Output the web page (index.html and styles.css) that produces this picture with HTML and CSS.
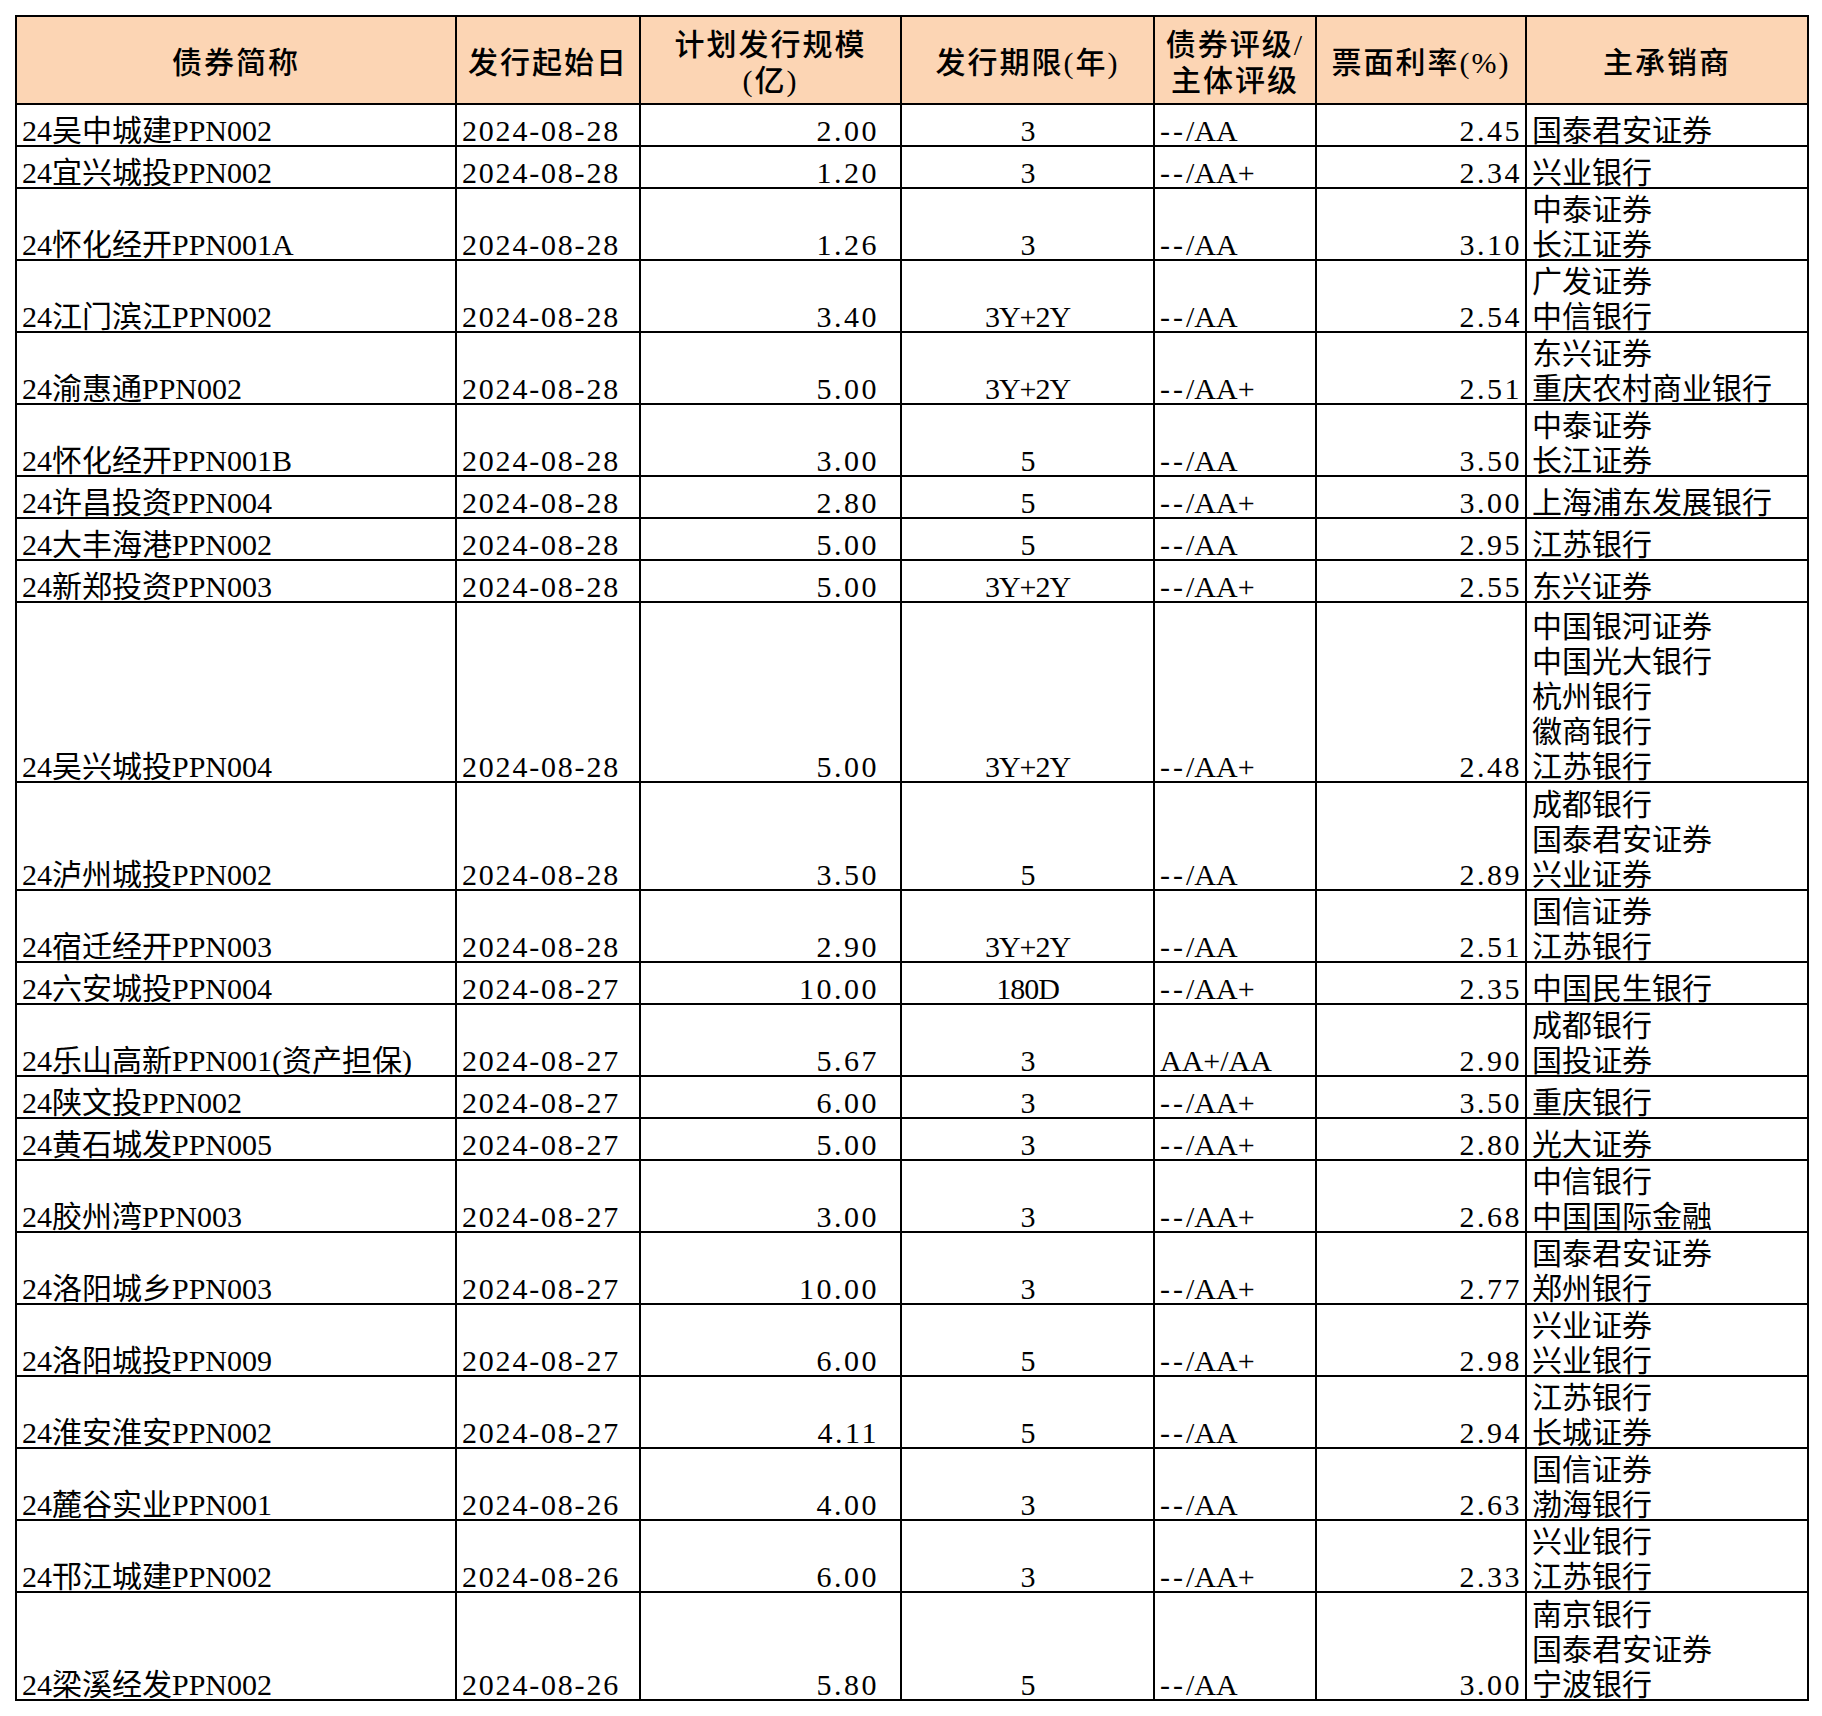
FILE: index.html
```html
<!DOCTYPE html>
<html lang="zh-CN">
<head>
<meta charset="utf-8">
<title>PPN发行</title>
<link rel="stylesheet" href="styles.css">
</head>
<body>
<table class="bonds">
<colgroup>
<col class="c1"><col class="c2"><col class="c3"><col class="c4"><col class="c5"><col class="c6"><col class="c7">
</colgroup>
<thead>
<tr class="head">
<th>债券简称</th><th>发行起始日</th><th>计划发行规模<br>(亿)</th><th>发行期限(年)</th><th>债券评级/<br>主体评级</th><th>票面利率(%)</th><th>主承销商</th>
</tr>
</thead>
<tbody>
<tr class="r1"><td><div>24吴中城建PPN002</div></td><td><div>2024-08-28</div></td><td><div>2.00</div></td><td><div>3</div></td><td><div><span class="dash">--</span>/AA</div></td><td><div>2.45</div></td><td><div>国泰君安证券</div></td></tr>
<tr class="r1"><td><div>24宜兴城投PPN002</div></td><td><div>2024-08-28</div></td><td><div>1.20</div></td><td><div>3</div></td><td><div><span class="dash">--</span>/AA+</div></td><td><div>2.34</div></td><td><div>兴业银行</div></td></tr>
<tr class="r2"><td><div>24怀化经开PPN001A</div></td><td><div>2024-08-28</div></td><td><div>1.26</div></td><td><div>3</div></td><td><div><span class="dash">--</span>/AA</div></td><td><div>3.10</div></td><td><div>中泰证券<br>长江证券</div></td></tr>
<tr class="r2"><td><div>24江门滨江PPN002</div></td><td><div>2024-08-28</div></td><td><div>3.40</div></td><td><div>3Y+2Y</div></td><td><div><span class="dash">--</span>/AA</div></td><td><div>2.54</div></td><td><div>广发证券<br>中信银行</div></td></tr>
<tr class="r2"><td><div>24渝惠通PPN002</div></td><td><div>2024-08-28</div></td><td><div>5.00</div></td><td><div>3Y+2Y</div></td><td><div><span class="dash">--</span>/AA+</div></td><td><div>2.51</div></td><td><div>东兴证券<br>重庆农村商业银行</div></td></tr>
<tr class="r2"><td><div>24怀化经开PPN001B</div></td><td><div>2024-08-28</div></td><td><div>3.00</div></td><td><div>5</div></td><td><div><span class="dash">--</span>/AA</div></td><td><div>3.50</div></td><td><div>中泰证券<br>长江证券</div></td></tr>
<tr class="r1"><td><div>24许昌投资PPN004</div></td><td><div>2024-08-28</div></td><td><div>2.80</div></td><td><div>5</div></td><td><div><span class="dash">--</span>/AA+</div></td><td><div>3.00</div></td><td><div>上海浦东发展银行</div></td></tr>
<tr class="r1"><td><div>24大丰海港PPN002</div></td><td><div>2024-08-28</div></td><td><div>5.00</div></td><td><div>5</div></td><td><div><span class="dash">--</span>/AA</div></td><td><div>2.95</div></td><td><div>江苏银行</div></td></tr>
<tr class="r1"><td><div>24新郑投资PPN003</div></td><td><div>2024-08-28</div></td><td><div>5.00</div></td><td><div>3Y+2Y</div></td><td><div><span class="dash">--</span>/AA+</div></td><td><div>2.55</div></td><td><div>东兴证券</div></td></tr>
<tr class="r5"><td><div>24吴兴城投PPN004</div></td><td><div>2024-08-28</div></td><td><div>5.00</div></td><td><div>3Y+2Y</div></td><td><div><span class="dash">--</span>/AA+</div></td><td><div>2.48</div></td><td><div>中国银河证券<br>中国光大银行<br>杭州银行<br>徽商银行<br>江苏银行</div></td></tr>
<tr class="r3"><td><div>24泸州城投PPN002</div></td><td><div>2024-08-28</div></td><td><div>3.50</div></td><td><div>5</div></td><td><div><span class="dash">--</span>/AA</div></td><td><div>2.89</div></td><td><div>成都银行<br>国泰君安证券<br>兴业证券</div></td></tr>
<tr class="r2"><td><div>24宿迁经开PPN003</div></td><td><div>2024-08-28</div></td><td><div>2.90</div></td><td><div>3Y+2Y</div></td><td><div><span class="dash">--</span>/AA</div></td><td><div>2.51</div></td><td><div>国信证券<br>江苏银行</div></td></tr>
<tr class="r1"><td><div>24六安城投PPN004</div></td><td><div>2024-08-27</div></td><td><div>10.00</div></td><td><div>180D</div></td><td><div><span class="dash">--</span>/AA+</div></td><td><div>2.35</div></td><td><div>中国民生银行</div></td></tr>
<tr class="r2"><td><div>24乐山高新PPN001(资产担保)</div></td><td><div>2024-08-27</div></td><td><div>5.67</div></td><td><div>3</div></td><td><div>AA+/AA</div></td><td><div>2.90</div></td><td><div>成都银行<br>国投证券</div></td></tr>
<tr class="r1"><td><div>24陕文投PPN002</div></td><td><div>2024-08-27</div></td><td><div>6.00</div></td><td><div>3</div></td><td><div><span class="dash">--</span>/AA+</div></td><td><div>3.50</div></td><td><div>重庆银行</div></td></tr>
<tr class="r1"><td><div>24黄石城发PPN005</div></td><td><div>2024-08-27</div></td><td><div>5.00</div></td><td><div>3</div></td><td><div><span class="dash">--</span>/AA+</div></td><td><div>2.80</div></td><td><div>光大证券</div></td></tr>
<tr class="r2"><td><div>24胶州湾PPN003</div></td><td><div>2024-08-27</div></td><td><div>3.00</div></td><td><div>3</div></td><td><div><span class="dash">--</span>/AA+</div></td><td><div>2.68</div></td><td><div>中信银行<br>中国国际金融</div></td></tr>
<tr class="r2"><td><div>24洛阳城乡PPN003</div></td><td><div>2024-08-27</div></td><td><div>10.00</div></td><td><div>3</div></td><td><div><span class="dash">--</span>/AA+</div></td><td><div>2.77</div></td><td><div>国泰君安证券<br>郑州银行</div></td></tr>
<tr class="r2"><td><div>24洛阳城投PPN009</div></td><td><div>2024-08-27</div></td><td><div>6.00</div></td><td><div>5</div></td><td><div><span class="dash">--</span>/AA+</div></td><td><div>2.98</div></td><td><div>兴业证券<br>兴业银行</div></td></tr>
<tr class="r2"><td><div>24淮安淮安PPN002</div></td><td><div>2024-08-27</div></td><td><div>4.11</div></td><td><div>5</div></td><td><div><span class="dash">--</span>/AA</div></td><td><div>2.94</div></td><td><div>江苏银行<br>长城证券</div></td></tr>
<tr class="r2"><td><div>24麓谷实业PPN001</div></td><td><div>2024-08-26</div></td><td><div>4.00</div></td><td><div>3</div></td><td><div><span class="dash">--</span>/AA</div></td><td><div>2.63</div></td><td><div>国信证券<br>渤海银行</div></td></tr>
<tr class="r2"><td><div>24邗江城建PPN002</div></td><td><div>2024-08-26</div></td><td><div>6.00</div></td><td><div>3</div></td><td><div><span class="dash">--</span>/AA+</div></td><td><div>2.33</div></td><td><div>兴业银行<br>江苏银行</div></td></tr>
<tr class="r3"><td><div>24梁溪经发PPN002</div></td><td><div>2024-08-26</div></td><td><div>5.80</div></td><td><div>5</div></td><td><div><span class="dash">--</span>/AA</div></td><td><div>3.00</div></td><td><div>南京银行<br>国泰君安证券<br>宁波银行</div></td></tr>
</tbody>
</table>
</body>
</html>
```

FILE: styles.css
```css
html, body {
  margin: 0;
  padding: 0;
  background: #ffffff;
}

body {
  padding: 15px 0 0 15px;
  font-family: "Liberation Serif", "Noto Sans CJK SC", serif;
  font-size: 30px;
  color: #000000;
}

.bonds {
  border-collapse: collapse;
  table-layout: fixed;
  width: 1792px;
}

.c1 { width: 440px; }
.c2 { width: 184px; }
.c3 { width: 261px; }
.c4 { width: 253px; }
.c5 { width: 162px; }
.c6 { width: 210px; }
.c7 { width: 282px; }

.bonds th,
.bonds td {
  border: 2px solid #000000;
  padding: 0 5px;
  line-height: 35px;
  white-space: nowrap;
}

.bonds th {
  background: #fcd5b4;
  font-weight: 500;
  text-align: center;
  vertical-align: middle;
  letter-spacing: 2px;
  line-height: 36px;
  padding-top: 6px;
}

.head { height: 88px; }

.bonds td {
  text-align: left;
  vertical-align: bottom;
}

.bonds td > div {
  margin-bottom: -3px;
}

/* date column */
.bonds td:nth-child(2) {
  letter-spacing: 1.8px;
}

/* planned size: number format with trailing space */
.bonds td:nth-child(3) {
  text-align: right;
  letter-spacing: 2.5px;
  padding-right: 21px;
}

/* term */
.bonds td:nth-child(4) {
  text-align: center;
  letter-spacing: -1px;
}

/* rating */
.dash {
  letter-spacing: 3px;
}

/* coupon rate */
.bonds td:nth-child(6) {
  text-align: right;
  letter-spacing: 2.5px;
  padding-right: 3px;
}

.r1 { height: 42px; }
.r2 { height: 72px; }
.r3 { height: 108px; }
.r5 { height: 180px; }
```
